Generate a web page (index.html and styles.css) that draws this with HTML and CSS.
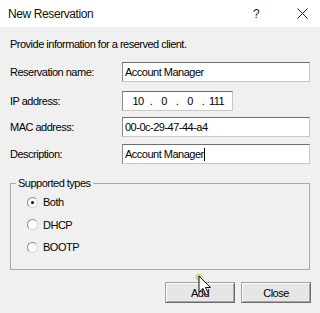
FILE: index.html
```html
<!DOCTYPE html>
<html lang="en">
<head>
  <meta charset="UTF-8" />
  <title>New Reservation</title>
  <link rel="stylesheet" href="styles.css">
</head>
<body>

  <div class="dialog">
    <div class="titlebar">
      <span class="title">New Reservation</span>
      <span class="help">?</span>
      <span class="close-x">
        <svg width="11" height="11" viewBox="0 0 11 11"><path d="M0.5 0.5 L10.5 10.5 M10.5 0.5 L0.5 10.5" stroke="#222" stroke-width="1" fill="none"/></svg>
      </span>
    </div>

    <div class="content">
      <p class="intro">Provide information for a reserved client.</p>

      <div class="row row-name">
        <label>Reservation name:</label>
        <div class="field">Account Manager</div>
      </div>
      <div class="row row-ip">
        <label>IP address:</label>
        <div class="field ip">
          <span class="oct">10</span><span class="dot">.</span>
          <span class="oct">0</span><span class="dot">.</span>
          <span class="oct">0</span><span class="dot">.</span>
          <span class="oct">111</span>
        </div>
      </div>
      <div class="row row-mac">
        <label>MAC address:</label>
        <div class="field">00-0c-29-47-44-a4</div>
      </div>
      <div class="row row-desc">
        <label>Description:</label>
        <div class="field">Account Manager<span class="caret"></span></div>
      </div>

      <fieldset class="group">
        <legend>Supported types</legend>
        <div class="radio"><span class="circle checked"></span>Both</div>
        <div class="radio"><span class="circle"></span>DHCP</div>
        <div class="radio"><span class="circle"></span>BOOTP</div>
      </fieldset>

      <div class="buttons">
        <button class="btn">Add</button>
        <button class="btn">Close</button>
      </div>
    </div>

    <!-- mouse pointer over the Add button -->
    <svg class="pointer" width="20" height="24" viewBox="0 0 20 24">
      <circle cx="4" cy="4" r="3.5" fill="#c8d060" opacity="0.8"/>
      <path d="M4 3 L4 19 L8 15.5 L11 22 L13.5 21 L10.5 14.5 L15.5 14.5 Z" fill="#fff" stroke="#111" stroke-width="1"/>
    </svg>
  </div>

</body>
</html>
```

FILE: styles.css
```css
* {
  margin: 0;
  padding: 0;
  box-sizing: border-box;
}
body {
  font-family: 'Liberation Sans', Arial, sans-serif;
  font-size: 11px;
  letter-spacing: -0.5px;
  color: #000;
  background: #f0f0f0;
}
.dialog {
  position: relative;
  width: 320px;
  height: 313px;
  background: #f0f0f0;
}
.titlebar {
  height: 27px;
  background: #fff;
  display: flex;
  align-items: center;
  padding: 0 0 0 8px;
}
.title {
  flex: 1;
  font-size: 12px;
  letter-spacing: -0.4px;
  color: #111;
}
.help {
  font-size: 12px;
  width: 44px;
  color: #222;
}
.close-x {
  width: 23px;
  display: flex;
  align-items: center;
}
.content {
  padding: 0 10px;
}
.intro {
  margin-top: 10px;
  line-height: 14px;
}
.row {
  display: flex;
  align-items: center;
  height: 20px;
}
.row-name { margin-top: 11px; }
.row-ip { margin-top: 9px; }
.row-mac { margin-top: 6px; }
.row-desc { margin-top: 7px; }
.row label {
  width: 112px;
}
.field {
  width: 188px;
  height: 20px;
  background: #fff;
  border: 1px solid #c8c8c8;
  border-top-color: #6e6e6e;
  border-left-color: #8a8a8a;
  padding: 0 2px;
  line-height: 18px;
  display: flex;
  align-items: center;
}
.field.ip {
  width: 111px;
  padding-left: 8px;
}
.oct {
  width: 14px;
  text-align: center;
}
.dot {
  width: 12px;
  text-align: center;
}
.caret {
  display: inline-block;
  width: 1px;
  height: 13px;
  background: #000;
}
.group {
  margin-top: 12px;
  border: 1px solid #a8a8a8;
  padding: 1px 0 10px 16px;
  height: 94px;
}
.group legend {
  margin-left: -11px;
  padding: 0 2px;
  line-height: 14px;
}
.radio {
  display: flex;
  align-items: center;
  height: 22.5px;
}
.circle {
  width: 11px;
  height: 11px;
  border-radius: 50%;
  background: #fff;
  border: 1px solid #d6d6d6;
  border-top-color: #8a8a8a;
  border-left-color: #8a8a8a;
  margin-right: 5px;
  display: flex;
  align-items: center;
  justify-content: center;
}
.circle.checked::after {
  content: '';
  width: 3px;
  height: 3px;
  border-radius: 50%;
  background: #000;
}
.buttons {
  margin-top: 12px;
  display: flex;
  justify-content: flex-end;
  gap: 6px;
  margin-right: -1px;
}
.btn {
  font-family: inherit;
  font-size: 11px;
  letter-spacing: -0.5px;
  width: 70px;
  height: 21px;
  background: #e6e6e6;
  border: 1px solid #a0a0a0;
  border-right-color: #6a6a6a;
  border-bottom-color: #6a6a6a;
  box-shadow: inset 1px 1px 0 #fff, inset -1px -1px 0 #a8a8a8;
  color: #000;
}
.pointer {
  position: absolute;
  left: 195px;
  top: 273px;
}
```
